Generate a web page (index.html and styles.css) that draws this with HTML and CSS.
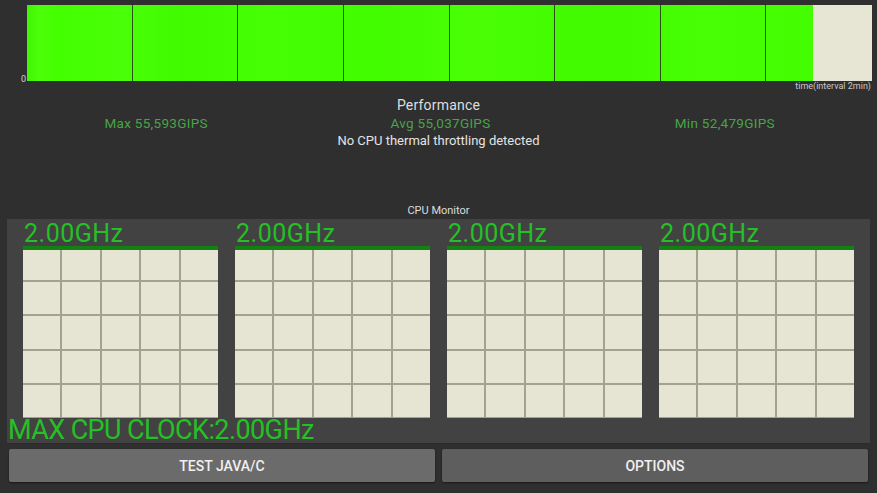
FILE: index.html
```html
<!DOCTYPE html>
<html>
<head>
  <title>CPU Throttling Test</title>
  <link rel="stylesheet" href="styles.css">
</head>
<body>
    <div class="screen">
        <div class="chart-row">
            <span class="axis-zero">0</span>
            <div class="plot">
                <div class="fill" style="width: 93%"></div>
                <div class="cols">
                    <div></div><div></div><div></div><div></div>
                    <div></div><div></div><div></div><div></div>
                </div>
            </div>
        </div>
        <div class="axis-time">time(interval 2min)</div>

        <div class="perf-title">Performance</div>
        <div class="stats">
            <span>Max 55,593GIPS</span>
            <span>Avg 55,037GIPS</span>
            <span>Min 52,479GIPS</span>
        </div>
        <div class="throttle">No CPU thermal throttling detected</div>

        <div class="monitor-title">CPU Monitor</div>
        <div class="monitor">
            <div class="cores">
                <div class="core">
                    <div class="freq">2.00GHz</div>
                    <div class="load"></div>
                    <div class="graph">
                        <i></i><i></i><i></i><i></i><i></i><i></i><i></i><i></i><i></i><i></i><i></i><i></i><i></i>
                        <i></i><i></i><i></i><i></i><i></i><i></i><i></i><i></i><i></i><i></i><i></i><i></i>
                    </div>
                </div>
                <div class="core">
                    <div class="freq">2.00GHz</div>
                    <div class="load"></div>
                    <div class="graph">
                        <i></i><i></i><i></i><i></i><i></i><i></i><i></i><i></i><i></i><i></i><i></i><i></i><i></i>
                        <i></i><i></i><i></i><i></i><i></i><i></i><i></i><i></i><i></i><i></i><i></i><i></i>
                    </div>
                </div>
                <div class="core">
                    <div class="freq">2.00GHz</div>
                    <div class="load"></div>
                    <div class="graph">
                        <i></i><i></i><i></i><i></i><i></i><i></i><i></i><i></i><i></i><i></i><i></i><i></i><i></i>
                        <i></i><i></i><i></i><i></i><i></i><i></i><i></i><i></i><i></i><i></i><i></i><i></i>
                    </div>
                </div>
                <div class="core">
                    <div class="freq">2.00GHz</div>
                    <div class="load"></div>
                    <div class="graph">
                        <i></i><i></i><i></i><i></i><i></i><i></i><i></i><i></i><i></i><i></i><i></i><i></i><i></i>
                        <i></i><i></i><i></i><i></i><i></i><i></i><i></i><i></i><i></i><i></i><i></i><i></i>
                    </div>
                </div>
            </div>
            <div class="max-clock">MAX CPU CLOCK:2.00GHz</div>
        </div>

        <div class="actions">
            <button class="btn btn-test">TEST JAVA/C</button>
            <button class="btn btn-options">OPTIONS</button>
        </div>
    </div>
</body>
</html>
```

FILE: styles.css
```css
/* Page */
body {
    margin: 0;
    background-color: #2f2f2f;
    font-family: Roboto, "Liberation Sans", sans-serif;
    color: #e2e2e2;
}

.screen {
    width: 877px;
    height: 493px;
    overflow: hidden;
    padding-top: 5px;
    box-sizing: border-box;
}

/* Performance chart */
.chart-row {
    display: flex;
    height: 76px;
}

.axis-zero {
    width: 27px;
    box-sizing: border-box;
    padding-right: 1px;
    align-self: flex-end;
    text-align: right;
    font-size: 9px;
    line-height: 9px;
    margin-bottom: -3px;
    color: #cfcfcf;
}

.plot {
    position: relative;
    width: 845px;
    background-color: #e7e5d3;
}

.fill {
    height: 100%;
    background-color: #44ff00;
    background-image:
        linear-gradient(to right, #40f500 0, #4cff0a 1.5%, #44ff00 4%, #4aff08 12%, #40fb00 20%, #46ff04 31%, #42fc00 44%, #4aff06 58%, #41fa00 72%, #48ff05 86%, #43fd00 100%);
}

/* column separators sit over the fill */
.cols {
    position: absolute;
    top: 0;
    left: 0;
    right: 0;
    bottom: 0;
    display: grid;
    grid-template-columns: repeat(8, 1fr);
}

.cols div {
    border-right: 1px solid #285010;
}

.cols div:last-child {
    border-right: none;
}

.axis-time {
    text-align: right;
    padding-right: 6px;
    font-size: 9px;
    line-height: 11px;
    color: #c8c8c8;
}

/* Summary */
.perf-title {
    margin-top: 5px;
    text-align: center;
    font-size: 14px;
    line-height: 17px;
    color: #dedede;
    letter-spacing: 0.2px;
}

.stats {
    display: grid;
    grid-template-columns: repeat(3, 1fr);
    padding: 0 10px 0 14px;
    margin-top: 1px;
    font-size: 13.5px;
    line-height: 16px;
    letter-spacing: 0.3px;
    color: #47a447;
    text-align: center;
}

.throttle {
    margin-top: 2px;
    text-align: center;
    font-size: 13px;
    line-height: 16px;
    color: #e4e4e4;
}

/* CPU monitor */
.monitor-title {
    margin-top: 55px;
    text-align: center;
    font-size: 11px;
    line-height: 14px;
    color: #dcdcdc;
}

.monitor {
    margin: 1px 7px 0 7px;
    height: 224px;
    background-color: #424242;
    box-shadow: 0 1px 0 #2a2a2a;
}

.cores {
    display: flex;
    gap: 17px;
    padding: 0 16px;
}

.core {
    width: 195px;
}

.freq {
    height: 27px;
    font-size: 25px;
    line-height: 30px;
    letter-spacing: 0.5px;
    color: #25c025;
    padding-left: 1px;
    white-space: nowrap;
}

.load {
    height: 4px;
    background-color: #138012;
}

.graph {
    display: grid;
    grid-template-columns: repeat(5, 1fr);
    grid-template-rows: 30px repeat(4, 1fr);
    gap: 2px;
    height: 167px;
    background-color: #a3a292;
    border-bottom: 1px solid #a3a292;
}

.graph i {
    background-color: #e6e5d3;
}

.max-clock {
    padding-left: 1px;
    font-size: 27px;
    line-height: 25px;
    letter-spacing: -0.6px;
    color: #25c025;
    white-space: nowrap;
}

/* Buttons */
.actions {
    display: flex;
    gap: 7px;
    padding: 0 9px;
    margin-top: 6px;
}

.btn {
    flex: 1;
    height: 33px;
    border: none;
    border-radius: 2px;
    font-family: Roboto, "Liberation Sans", sans-serif;
    font-size: 14px;
    font-weight: 500;
    color: #f0f0f0;
    box-shadow: 0 1px 2px rgba(0, 0, 0, 0.5);
}

.btn-test {
    background-color: #6b6b6b;
}

.btn-options {
    background-color: #5e5e5f;
}
```
